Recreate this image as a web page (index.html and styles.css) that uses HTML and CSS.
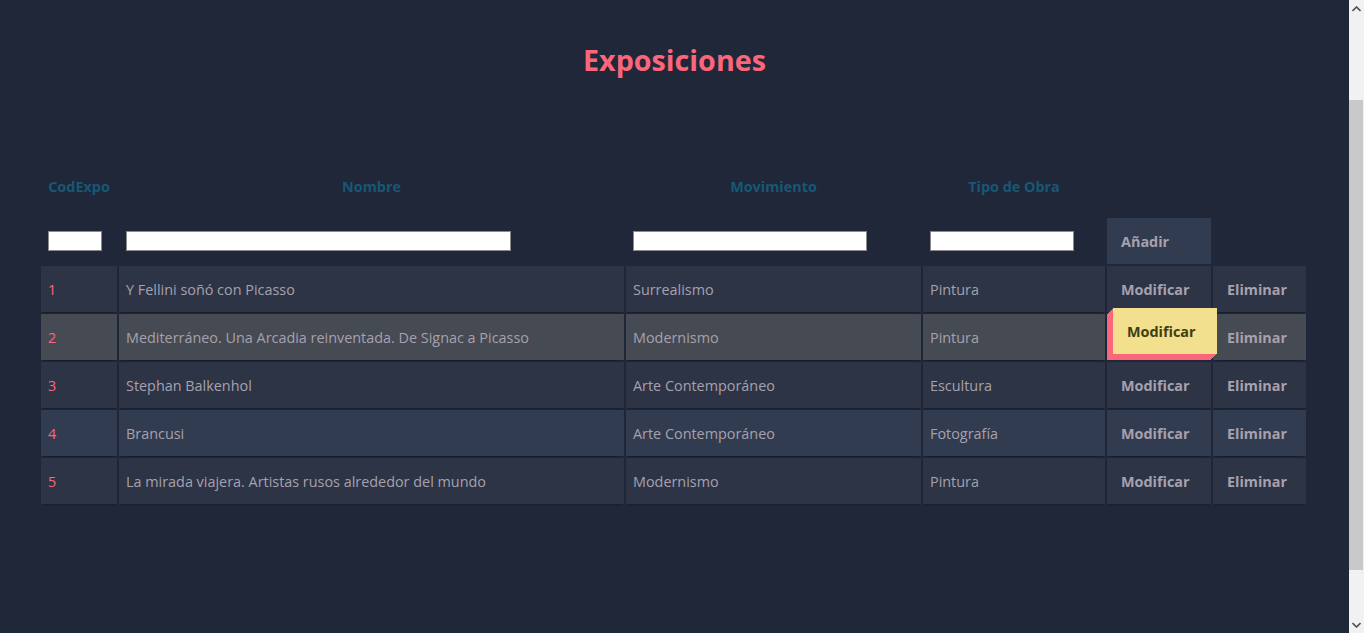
FILE: index.html
```html
<!DOCTYPE html>
<html lang="es">
<head>
<meta charset="utf-8">
<title>Exposiciones</title>
<link rel="stylesheet" href="styles.css">
</head>
<body>
<main class="page">
  <h1 class="title">Exposiciones</h1>
  <table class="expo">
    <colgroup>
      <col class="c1"><col class="c2"><col class="c3"><col class="c4"><col class="c5"><col class="c6">
    </colgroup>
    <thead>
      <tr class="head">
        <th>CodExpo</th>
        <th>Nombre</th>
        <th>Movimiento</th>
        <th>Tipo de Obra</th>
        <th></th>
        <th></th>
      </tr>
    </thead>
    <tbody>
      <tr class="add">
        <td><input class="in in-cod" type="text"></td>
        <td><input class="in in-nom" type="text"></td>
        <td><input class="in in-mov" type="text"></td>
        <td><input class="in in-tip" type="text"></td>
        <td class="btn btn-add">Añadir</td>
        <td class="empty"></td>
      </tr>
      <tr class="row">
        <td class="num">1</td>
        <td>Y Fellini soñó con Picasso</td>
        <td>Surrealismo</td>
        <td>Pintura</td>
        <td class="btn">Modificar</td>
        <td class="btn">Eliminar</td>
      </tr>
      <tr class="row row-hover">
        <td class="num">2</td>
        <td>Mediterráneo. Una Arcadia reinventada. De Signac a Picasso</td>
        <td>Modernismo</td>
        <td>Pintura</td>
        <td class="btn btn-hover">Modificar</td>
        <td class="btn">Eliminar</td>
      </tr>
      <tr class="row">
        <td class="num">3</td>
        <td>Stephan Balkenhol</td>
        <td>Arte Contemporáneo</td>
        <td>Escultura</td>
        <td class="btn">Modificar</td>
        <td class="btn">Eliminar</td>
      </tr>
      <tr class="row row-light">
        <td class="num">4</td>
        <td>Brancusi</td>
        <td>Arte Contemporáneo</td>
        <td>Fotografía</td>
        <td class="btn">Modificar</td>
        <td class="btn">Eliminar</td>
      </tr>
      <tr class="row">
        <td class="num">5</td>
        <td>La mirada viajera. Artistas rusos alrededor del mundo</td>
        <td>Modernismo</td>
        <td>Pintura</td>
        <td class="btn">Modificar</td>
        <td class="btn">Eliminar</td>
      </tr>
    </tbody>
  </table>
</main>
<aside class="scrollbar" aria-hidden="true">
  <div class="sb-arrow">
    <svg width="9" height="6" viewBox="0 0 9 6"><path d="M0.5 5 L4.5 1 L8.5 5" fill="none" stroke="#505050" stroke-width="1.6"/></svg>
  </div>
  <div class="sb-track">
    <div class="sb-gap-top"></div>
    <div class="sb-thumb"></div>
  </div>
  <div class="sb-arrow">
    <svg width="9" height="6" viewBox="0 0 9 6"><path d="M0.5 1 L4.5 5 L8.5 1" fill="none" stroke="#505050" stroke-width="1.6"/></svg>
  </div>
</aside>
</body>
</html>
```

FILE: styles.css
```css
html, body {
  height: 100%;
}
body {
  margin: 0;
  display: flex;
  overflow: hidden;
  background: #1F2739;
  color: #A7A1AE;
  font-family: "Open Sans", "Noto Sans", sans-serif;
  font-size: 14.4px;
}
.page {
  flex: 1;
  min-width: 0;
  padding-top: 41px;
}
.title {
  margin: 0 0 89px;
  text-align: center;
  color: #FB667A;
  font-size: 28.7px;
  line-height: 38px;
  font-weight: 700;
}
.expo {
  table-layout: fixed;
  width: 1269px;
  margin: 0 auto;
  border-spacing: 2px;
  position: relative;
  left: -1px;
  font-size: 14.4px;
}
.c1 { width: 76px; }
.c2 { width: 505px; }
.c3 { width: 295px; }
.c4 { width: 182px; }
.c5 { width: 104px; }
.c6 { width: 93px; }

.head th {
  height: 46px;
  padding: 7px 0 0;
  vertical-align: top;
  text-align: center;
  color: #185875;
  font-size: 14.4px;
  font-weight: 700;
  line-height: 19px;
  box-sizing: border-box;
}
.add td {
  height: 46px;
  padding: 0 7px;
  box-sizing: border-box;
}
.in {
  display: block;
  box-sizing: border-box;
  height: 20px;
  margin: 0;
  padding: 0 2px;
  border: 1px solid #8a8a8a;
  background: #fff;
}
.in-cod { width: 54px; }
.in-nom { width: 385px; }
.in-mov { width: 234px; }
.in-tip { width: 144px; }

.row td {
  height: 46px;
  padding: 0 7px;
  box-sizing: border-box;
  background: #2C3446;
  line-height: 19px;
  white-space: nowrap;
  box-shadow: 0 2px 2px -2px #0E1119;
}
.row-light td { background: #323C50; }
.row-hover td { background: #464A52; }
.num { color: #FB667A; }

.btn {
  font-weight: 700;
  padding-left: 14px !important;
}
.add .btn-add {
  background: #323C50;
}
.row .btn-hover {
  background: #F2E08F;
  color: #403E10;
  transform: translate(6px, -6px);
  box-shadow: -1px 1px #FB667A, -2px 2px #FB667A, -3px 3px #FB667A,
              -4px 4px #FB667A, -5px 5px #FB667A, -6px 6px #FB667A;
}

.scrollbar {
  flex: 0 0 15px;
  display: flex;
  flex-direction: column;
  background: #F1F1F1;
}
.sb-arrow {
  height: 17px;
  display: flex;
  align-items: center;
  justify-content: center;
}
.sb-track {
  flex: 1;
  display: flex;
  flex-direction: column;
}
.sb-gap-top {
  height: 83px;
}
.sb-thumb {
  height: 470px;
  margin: 0 1px 0 0;
  background: #C9C9C9;
}
```
